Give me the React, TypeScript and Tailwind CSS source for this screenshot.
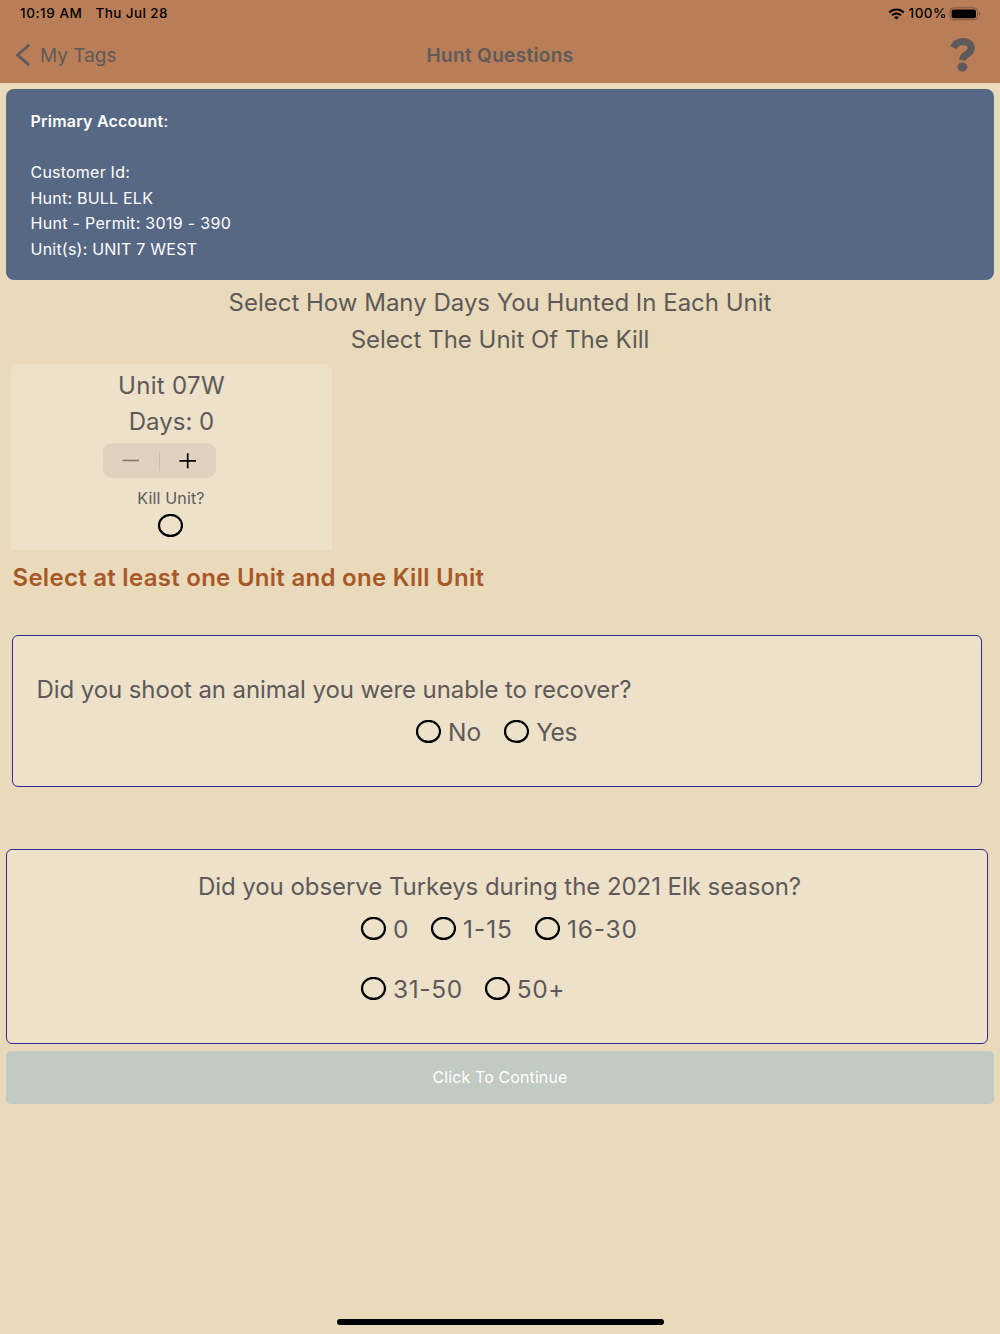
import { useState } from 'react';
import { clsx } from 'clsx';

interface RadioProps {
  label?: string;
  selected: boolean;
  onSelect: () => void;
  className?: string;
  labelClassName?: string;
}

function Radio({ label, selected, onSelect, className, labelClassName }: RadioProps) {
  return (
    <button onClick={onSelect} className={clsx('flex items-center', className)}>
      <svg width="26" height="24" viewBox="0 0 26 24" className="shrink-0">
        <ellipse cx="13.5" cy="11.4" rx="11.5" ry="10.5" fill="none" stroke="#000" strokeWidth="2.2" />
        {selected && <ellipse cx="13.5" cy="11.4" rx="6" ry="5.5" />}
      </svg>
      {label && (
        <span className={clsx('ml-[7px] whitespace-nowrap text-[24.5px] leading-[36px]', labelClassName)}>
          {label}
        </span>
      )}
    </button>
  );
}

function StatusBar() {
  return (
    <div className="flex h-[27px] items-center pl-[20px] pr-[19px] text-[13.5px] font-medium text-black">
      <span className="tracking-[0.55px]">10:19 AM</span>
      <span className="ml-[13px] tracking-[0.42px]">Thu Jul 28</span>
      <svg width="17" height="12" viewBox="0 0 17 12" className="ml-auto" fill="none" stroke="#000">
        <path d="M1.2 4.4a10.6 10.6 0 0 1 14.6 0" strokeWidth="2" />
        <path d="M4 7.2a6.6 6.6 0 0 1 9 0" strokeWidth="1.9" />
        <path d="M8.5 11.6 6.1 9.3a3.6 3.6 0 0 1 4.8 0z" fill="#000" stroke="none" />
      </svg>
      <span className="ml-[4px] tracking-[0.5px]">100%</span>
      <svg width="32" height="14" viewBox="0 0 32 14" className="ml-[2px]">
        <rect x="1" y="0.8" width="27.6" height="12" rx="3.6" fill="none" stroke="#7b5541" strokeWidth="1" />
        <rect x="2.6" y="2.6" width="24.4" height="8.6" rx="2" />
        <path d="M30 4.8c1.9.7 1.9 3.5 0 4.2z" fill="#7b5541" />
      </svg>
    </div>
  );
}

function NavBar() {
  return (
    <div className="grid h-[56px] grid-cols-3 items-center text-[#5e5b5a]">
      <button className="flex items-center pl-[15px]">
        <svg width="16" height="22" viewBox="0 0 16 22" fill="none" stroke="currentColor" strokeWidth="2.8">
          <path d="M13.4 1.6 2.6 11l10.8 9.4" strokeLinecap="round" />
        </svg>
        <span className="ml-[9px] pt-[2px] text-[19px]">My Tags</span>
      </button>
      <h1 className="pt-[2px] text-center text-[19px] font-semibold tracking-[0.35px]">Hunt Questions</h1>
      <button className="ml-auto mr-[24px]">
        <svg width="26" height="34" viewBox="0 0 26 34">
          <path
            d="M3.4 9.6C5.4 5.6 8.8 3.7 12.8 3.7c4.8 0 8.4 2.3 8.4 6.3 0 3.2-2 4.7-4.4 6.2-2.5 1.5-3.9 2.700-4.200 6.100"
            fill="none"
            stroke="currentColor"
            strokeWidth="7.2"
          />
          <ellipse cx="12.4" cy="29" rx="5" ry="4.6" fill="currentColor" />
        </svg>
      </button>
    </div>
  );
}

function AccountCard() {
  return (
    <section className="mx-[6px] mt-[5.5px] h-[191.5px] rounded-[8px] bg-[#576884] pl-[24.5px] pt-[20px] text-[16px] leading-[25.7px] tracking-[0.22px] text-white">
      <p>
        <span className="font-semibold">Primary Account</span>:
      </p>
      <p className="h-[25.7px]" />
      <p>Customer Id:</p>
      <p>Hunt: BULL ELK</p>
      <p className="tracking-[0.3px]">Hunt - Permit: 3019 - 390</p>
      <p>Unit(s): UNIT 7 WEST</p>
    </section>
  );
}

function UnitCard() {
  const [days, setDays] = useState(0);
  const [kill, setKill] = useState(false);

  return (
    <section className="ml-[11px] mt-[6px] flex h-[186px] w-[321px] flex-col items-center rounded-t-[9px] bg-[#ede1ca] pt-[4px]">
      <p className="text-[24px] leading-[36px] tracking-[0.3px]">Unit 07W</p>
      <p className="text-[24px] leading-[36px]">Days: {days}</p>
      <div className="mr-[24px] mt-[3px] flex h-[35px] w-[113px] items-center rounded-[9px] bg-[#dfd3bf]">
        <button className="flex flex-1 justify-center" onClick={() => setDays(Math.max(0, days - 1))}>
          <svg width="18" height="18" viewBox="0 0 18 18" stroke="#817b70" strokeWidth="1.6">
            <path d="M.5 8.5h16.5" />
          </svg>
        </button>
        <span className="h-[20px] w-px bg-[#c9beae]" />
        <button className="flex flex-1 justify-center" onClick={() => setDays(days + 1)}>
          <svg width="18" height="18" viewBox="0 0 18 18" stroke="#000" strokeWidth="1.7">
            <path d="M.5 8.8h16.5M8.7 1.2v15" />
          </svg>
        </button>
      </div>
      <p className="mr-px mt-[8px] text-[16px] leading-[24px] tracking-[0.15px]">Kill Unit?</p>
      <Radio selected={kill} onSelect={() => setKill(!kill)} className="mr-[3px] mt-[4px]" />
    </section>
  );
}

export default function App() {
  const [recover, setRecover] = useState('');
  const [turkeys, setTurkeys] = useState('');

  return (
    <div className="flex h-[1334px] w-[1000px] flex-col overflow-hidden bg-[#e8daba] font-['Inter',sans-serif] text-[#5d5a59]">
      <header className="h-[83px] shrink-0 bg-[#b97e58]">
        <StatusBar />
        <NavBar />
      </header>

      <AccountCard />

      <div className="mt-[5px] text-center text-[24px] leading-[36.5px]">
        <p>Select How Many Days You Hunted In Each Unit</p>
        <p>Select The Unit Of The Kill</p>
      </div>

      <UnitCard />

      <p className="ml-[12.5px] mt-[10px] text-[24px] font-semibold leading-[36px] tracking-[0.28px] text-[#a85828]">
        Select at least one Unit and one Kill Unit
      </p>

      {/* Unrecovered animal question */}
      <section className="ml-[12px] mt-[39px] h-[152px] w-[970px] rounded-[6px] border border-[#322a8c] bg-[#ede1ca] pt-[36px]">
        <p className="ml-[23.5px] text-[24px] leading-[36px] tracking-[-0.09px]">
          Did you shoot an animal you were unable to recover?
        </p>
        <div className="ml-[402px] mt-[6px] flex">
          <Radio label="No" selected={recover === 'No'} onSelect={() => setRecover('No')} />
          <Radio
            label="Yes"
            selected={recover === 'Yes'}
            onSelect={() => setRecover('Yes')}
            className="ml-[22px]"
            labelClassName="tracking-[-0.4px]"
          />
        </div>
      </section>

      {/* Turkey question */}
      <section className="ml-[6px] mt-[62px] h-[195px] w-[982px] rounded-[6px] border border-[#322a8c] bg-[#ede1ca] pt-[19px]">
        <p className="ml-[5px] text-center text-[24px] leading-[36px] tracking-[-0.05px]">
          Did you observe Turkeys during the 2021 Elk season?
        </p>
        <div className="ml-[353px] mt-[6px] flex tracking-[0.6px]">
          <Radio label="0" selected={turkeys === '0'} onSelect={() => setTurkeys('0')} />
          <Radio
            label="1-15"
            selected={turkeys === '1-15'}
            onSelect={() => setTurkeys('1-15')}
            className="ml-[21px]"
            labelClassName="tracking-[0.95px]"
          />
          <Radio
            label="16-30"
            selected={turkeys === '16-30'}
            onSelect={() => setTurkeys('16-30')}
            className="ml-[21px]"
            labelClassName="tracking-[0.8px]"
          />
        </div>
        <div className="ml-[353px] mt-[24px] flex tracking-[0.6px]">
          <Radio label="31-50" selected={turkeys === '31-50'} onSelect={() => setTurkeys('31-50')} />
          <Radio label="50+" selected={turkeys === '50+'} onSelect={() => setTurkeys('50+')} className="ml-[21px]" />
        </div>
      </section>

      <button className="mx-[6px] mt-[7px] h-[53px] shrink-0 rounded-[5px] bg-[#c2cac4] pb-px text-[16px] tracking-[0.1px] text-white">
        Click To Continue
      </button>

      <div className="mx-auto mb-[9px] mt-auto h-[6px] w-[327px] rounded-full bg-black" />
    </div>
  );
}
